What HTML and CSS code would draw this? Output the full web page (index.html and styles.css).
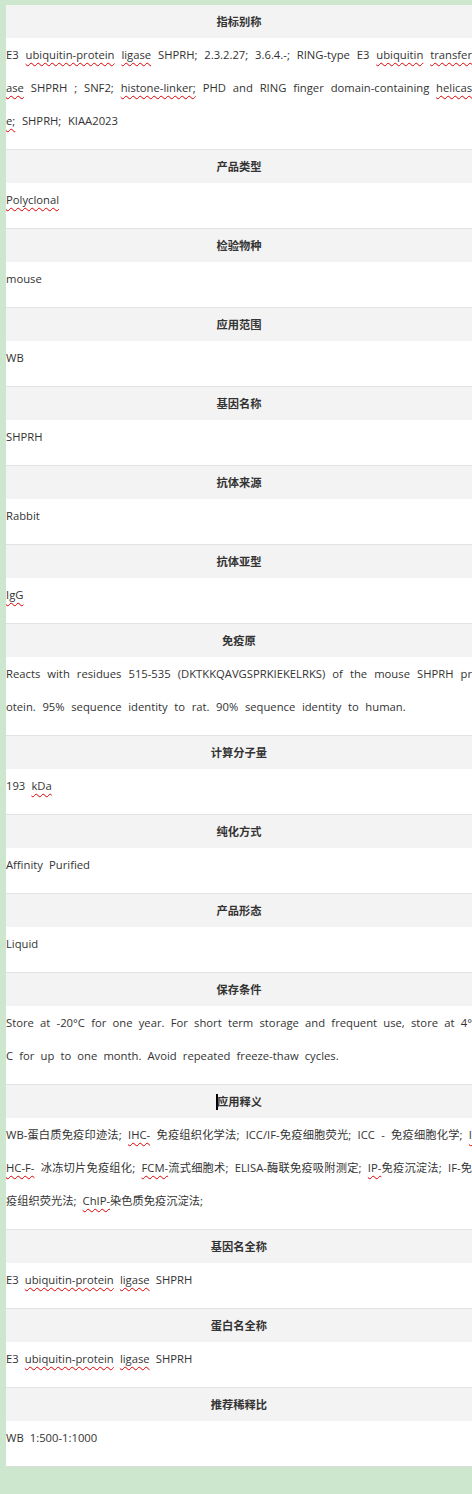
FILE: index.html
```html
<!DOCTYPE html>
<html lang="zh-CN">
<head>
<meta charset="utf-8">
<title>SHPRH 抗体</title>
<link rel="stylesheet" href="styles.css">
</head>
<body>
<div class="sheet">
  <div class="group">
    <div class="label">指标别称</div>
    <div class="value value-wide">E3 <span class="sp">ubiquitin-protein</span> <span class="sp">ligase</span> SHPRH; 2.3.2.27; 3.6.4.-; RING-type E3 <span class="sp">ubiquitin</span> <span class="sp">transferase</span> SHPRH ; SNF2; <span class="sp">histone-linker;</span> PHD and RING finger domain-containing <span class="sp">helicase;</span> SHPRH; KIAA2023</div>
  </div>
  <div class="group">
    <div class="label">产品类型</div>
    <div class="value"><span class="sp">Polyclonal</span></div>
  </div>
  <div class="group">
    <div class="label">检验物种</div>
    <div class="value">mouse</div>
  </div>
  <div class="group">
    <div class="label">应用范围</div>
    <div class="value">WB</div>
  </div>
  <div class="group">
    <div class="label">基因名称</div>
    <div class="value">SHPRH</div>
  </div>
  <div class="group">
    <div class="label">抗体来源</div>
    <div class="value">Rabbit</div>
  </div>
  <div class="group">
    <div class="label">抗体亚型</div>
    <div class="value"><span class="sp">IgG</span></div>
  </div>
  <div class="group">
    <div class="label">免疫原</div>
    <div class="value value-wide">Reacts with residues 515-535 (DKTKKQAVGSPRKIEKELRKS) of the mouse SHPRH protein. 95% sequence identity to rat. 90% sequence identity to human.</div>
  </div>
  <div class="group">
    <div class="label">计算分子量</div>
    <div class="value">193 <span class="sp">kDa</span></div>
  </div>
  <div class="group">
    <div class="label">纯化方式</div>
    <div class="value">Affinity Purified</div>
  </div>
  <div class="group">
    <div class="label">产品形态</div>
    <div class="value">Liquid</div>
  </div>
  <div class="group">
    <div class="label">保存条件</div>
    <div class="value">Store at -20°C for one year. For short term storage and frequent use, store at 4°C for up to one month. Avoid repeated freeze-thaw cycles.</div>
  </div>
  <div class="group">
    <div class="label"><span class="caret"></span>应用释义</div>
    <div class="value">WB-蛋白质免疫印迹法; <span class="sp">IHC-</span> 免疫组织化学法; ICC/IF-免疫细胞荧光; ICC - 免疫细胞化学; <span class="sp">IHC-F-</span> 冰冻切片免疫组化; <span class="sp">FCM-</span>流式细胞术; ELISA-酶联免疫吸附测定; <span class="sp">IP-</span>免疫沉淀法; IF-免疫组织荧光法; <span class="sp">ChIP-</span>染色质免疫沉淀法;</div>
  </div>
  <div class="group">
    <div class="label">基因名全称</div>
    <div class="value">E3 <span class="sp">ubiquitin-protein</span> <span class="sp">ligase</span> SHPRH</div>
  </div>
  <div class="group">
    <div class="label">蛋白名全称</div>
    <div class="value">E3 <span class="sp">ubiquitin-protein</span> <span class="sp">ligase</span> SHPRH</div>
  </div>
  <div class="group">
    <div class="label">推荐稀释比</div>
    <div class="value">WB 1:500-1:1000</div>
  </div>
</div>
</body>
</html>
```

FILE: styles.css
```css
html, body {
  margin: 0;
  padding: 0;
}
body {
  background: #cde7cf;
  font-family: "Open Sans", "Noto Sans CJK SC", sans-serif;
  font-size: 11.25px;
  color: #333;
  overflow-x: hidden;
  padding-top: 5px;
}
.sheet {
  margin-left: 6px;
  background: #fff;
}
.group {
  border-bottom: 1px solid #e2e2e2;
}
.group:last-child {
  border-bottom-color: #dcdcdc;
}
.label {
  background: #f3f3f3;
  height: 33px;
  line-height: 33px;
  text-align: center;
  font-weight: bold;
  color: #333;
}
.value {
  line-height: 33px;
  padding-bottom: 12px;
  text-align: justify;
  word-break: break-all;
  line-break: anywhere;
  word-spacing: 3.2px;
}
.value-wide {
  word-spacing: 3.7px;
}
.sp {
  text-decoration: underline wavy #e00000;
  text-decoration-thickness: 1px;
  text-underline-offset: 3px;
  text-decoration-skip-ink: none;
}
.caret {
  display: inline-block;
  width: 2px;
  height: 16px;
  background: #000;
  vertical-align: -4px;
  margin-right: -1px;
}
```
